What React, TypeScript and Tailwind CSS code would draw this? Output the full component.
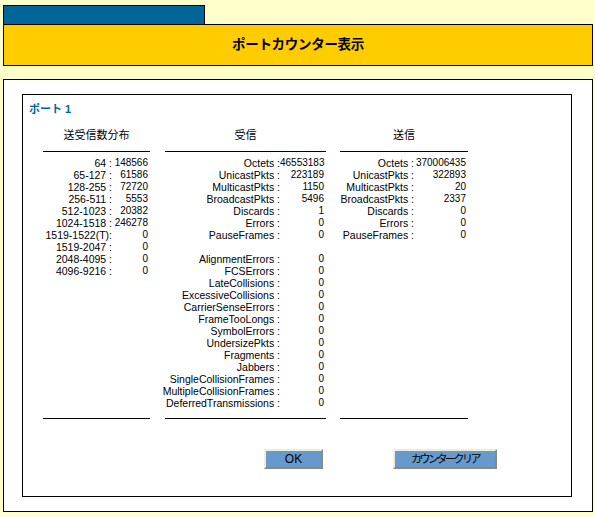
import React from "react";

type Row = [string, string] | null;

const dist: Row[] = [
  ["64 :", "148566"],
  ["65-127 :", "61586"],
  ["128-255 :", "72720"],
  ["256-511 :", "5553"],
  ["512-1023 :", "20382"],
  ["1024-1518 :", "246278"],
  ["1519-1522(T):", "0"],
  ["1519-2047 :", "0"],
  ["2048-4095 :", "0"],
  ["4096-9216 :", "0"],
];

const rx: Row[] = [
  ["Octets :", "46553183"],
  ["UnicastPkts :", "223189"],
  ["MulticastPkts :", "1150"],
  ["BroadcastPkts :", "5496"],
  ["Discards :", "1"],
  ["Errors :", "0"],
  ["PauseFrames :", "0"],
  null,
  ["AlignmentErrors :", "0"],
  ["FCSErrors :", "0"],
  ["LateCollisions :", "0"],
  ["ExcessiveCollisions :", "0"],
  ["CarrierSenseErrors :", "0"],
  ["FrameTooLongs :", "0"],
  ["SymbolErrors :", "0"],
  ["UndersizePkts :", "0"],
  ["Fragments :", "0"],
  ["Jabbers :", "0"],
  ["SingleCollisionFrames :", "0"],
  ["MultipleCollisionFrames :", "0"],
  ["DeferredTransmissions :", "0"],
];

const tx: Row[] = [
  ["Octets :", "370006435"],
  ["UnicastPkts :", "322893"],
  ["MulticastPkts :", "20"],
  ["BroadcastPkts :", "2337"],
  ["Discards :", "0"],
  ["Errors :", "0"],
  ["PauseFrames :", "0"],
];

function Column({
  title,
  rows,
  width,
  labelW,
}: {
  title: string;
  rows: Row[];
  width: string;
  labelW: string;
}) {
  return (
    <div className={`${width} flex flex-col shrink-0`}>
      <div className="h-[12px] leading-[12px] text-center text-[11px]">{title}</div>
      <div className="h-[10px]" />
      <div className="h-px bg-black" />
      <div className="flex-1 pt-[5px] pb-[9px]">
        {rows.map((r, i) =>
          r ? (
            <div key={i} className="flex h-[12px] leading-[12px] whitespace-nowrap">
              <div className={`${labelW} flex justify-end shrink-0 text-[10.5px]`}>
                <span>{r[0]}</span>
              </div>
              <div className="flex-1 text-right pr-[2px] text-[10px]">{r[1]}</div>
            </div>
          ) : (
            <div key={i} className="h-[12px]" />
          )
        )}
      </div>
      <div className="h-px bg-black" />
    </div>
  );
}

function Btn({ children, w }: { children: React.ReactNode; w: string }) {
  return (
    <button
      className={`${w} h-[20px] bg-[#6699cc] border-2 border-t-[#f0ecd8] border-l-[#f0ecd8] border-r-[#8a8a80] border-b-[#8a8a80] leading-[14px] text-black flex items-center justify-center`}
    >
      {children}
    </button>
  );
}

export default function App() {
  return (
    <div
      className="w-[595px] h-[517px] bg-[#ffffcc] overflow-hidden pt-[5px] text-[11px] text-black"
      style={{ fontFamily: '"Liberation Sans", "Noto Sans CJK JP", sans-serif' }}
    >
      <div className="ml-[3px] w-[202px] h-[19px] bg-[#006699] border border-black border-b-0" />
      <div className="ml-[3px] w-[590px] h-[42px] bg-[#ffcc00] border border-black flex items-center justify-center">
        <span className="text-[13.5px] font-bold tracking-[-0.3px]">ポートカウンター表示</span>
      </div>
      <div className="ml-[3px] mt-[13px] w-[590px] h-[433px] bg-white border border-black pt-[14px] pl-[18px]">
        <div className="w-[550px] h-[403px] border border-black">
          <div className="pt-[8px] pl-[6px] h-[20px] leading-[12px] text-[#006699] font-bold text-[11px]">
            ポート 1
          </div>
          <div className="h-[14px]" />
          <div className="flex ml-[20px] items-stretch">
            <Column title="送受信数分布" rows={dist} width="w-[107px]" labelW="w-[69px]" />
            <div className="w-[15px] shrink-0" />
            <Column title="受信" rows={rx} width="w-[161px]" labelW="w-[115px]" />
            <div className="w-[14px] shrink-0" />
            <Column title="送信" rows={tx} width="w-[128px]" labelW="w-[74px]" />
          </div>
          <div className="flex mt-[30px]">
            <div className="ml-[241px]">
              <Btn w="w-[59px]">
                <span className="text-[12px]">OK</span>
              </Btn>
            </div>
            <div className="ml-[70px]">
              <Btn w="w-[104px]">
                <span className="text-[11px] tracking-[-2.5px]">カウンタークリア</span>
              </Btn>
            </div>
          </div>
        </div>
      </div>
    </div>
  );
}
